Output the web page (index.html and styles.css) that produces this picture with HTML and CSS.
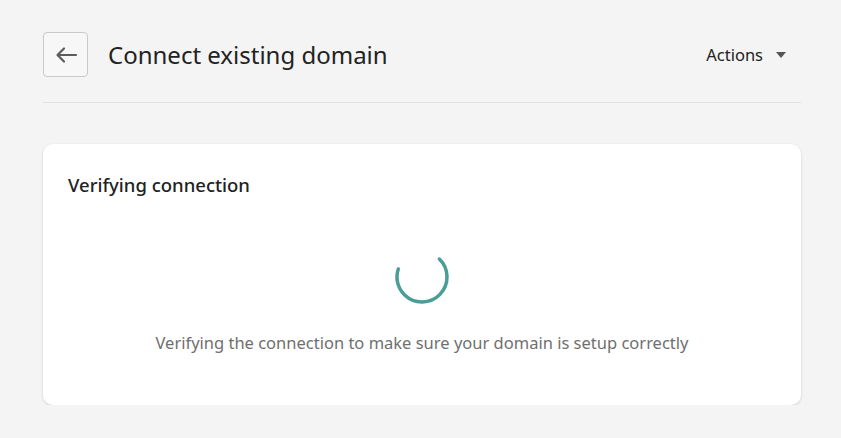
FILE: index.html
```html
<!DOCTYPE html>
<html lang="en">
<head>
    <meta charset="UTF-8">
    <meta name="viewport" content="width=device-width, initial-scale=1.0">
    <title>Connect existing domain</title>
    <link rel="stylesheet" href="styles.css">
</head>
<body>
    <div class="page">
        <div class="header">
            <button class="back-btn" aria-label="Back">
                <svg width="24" height="24" viewBox="0 0 24 24">
                    <path d="M22 12H3.5M10 5.5L3.5 12l6.5 6.5" fill="none" stroke="#5c5c5c" stroke-width="2.2" stroke-linecap="round" stroke-linejoin="round"/>
                </svg>
            </button>
            <h1 class="title">Connect existing domain</h1>
            <div class="actions">
                Actions
                <span class="caret"></span>
            </div>
        </div>

        <div class="card">
            <h2 class="card-title">Verifying connection</h2>
            <div class="loading">
                <svg class="spinner" width="58" height="58" viewBox="0 0 58 58">
                    <circle cx="29" cy="29" r="25" fill="none" stroke="#4b9d97" stroke-width="3.5" stroke-linecap="round" stroke-dasharray="106 200" transform="rotate(-46 29 29)"/>
                </svg>
                <p class="loading-text">Verifying the connection to make sure your domain is setup correctly</p>
            </div>
        </div>
    </div>
</body>
</html>
```

FILE: styles.css
```css
body {
    margin: 0;
    background-color: #f4f4f4;
    font-family: 'Noto Sans', 'Open Sans', sans-serif;
    color: #202020;
}

.page {
    padding: 32px 40px 0 43px;
}

.header {
    display: flex;
    align-items: center;
    padding-bottom: 25px;
    border-bottom: 1px solid #e1e1e1;
}

.back-btn {
    width: 45px;
    height: 45px;
    display: flex;
    align-items: center;
    justify-content: center;
    background-color: #f7f7f7;
    border: 1px solid #c9c9c9;
    border-radius: 4px;
    padding: 0;
    cursor: pointer;
}

.title {
    margin: 0 0 0 20px;
    font-size: 24px;
    font-weight: 400;
    color: #222222;
    flex: 1;
}

.actions {
    display: flex;
    align-items: center;
    font-size: 16.5px;
    color: #222222;
    padding-right: 15px;
}

.caret {
    margin-left: 13px;
    width: 0;
    height: 0;
    border-left: 5px solid transparent;
    border-right: 5px solid transparent;
    border-top: 6px solid #555555;
}

.card {
    margin-top: 41px;
    background-color: #ffffff;
    border-radius: 10px;
    box-shadow: 0 1px 3px rgba(0, 0, 0, 0.15);
    padding: 28px 25px 51px 25px;
}

.card-title {
    margin: 0;
    font-size: 18.5px;
    font-weight: 500;
    color: #222222;
}

.loading {
    display: flex;
    flex-direction: column;
    align-items: center;
    padding-top: 51px;
}

.loading-text {
    margin: 25px 0 0 0;
    font-size: 16.5px;
    color: #6f6f6f;
}
```
